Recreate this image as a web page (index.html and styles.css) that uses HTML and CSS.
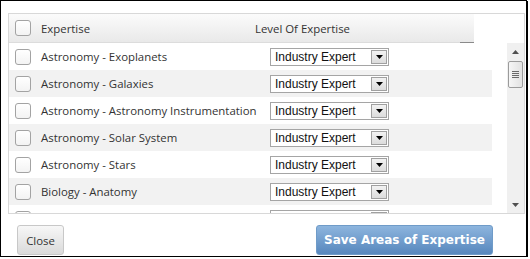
FILE: index.html
```html
<!DOCTYPE html>
<html>
<head>
<meta charset="utf-8">
<link rel="stylesheet" href="styles.css">
</head>
<body>
<div class="dialog">
  <div class="grid">
    <div class="grid-head">
      <div class="head-main">
        <span class="cb"></span>
        <span class="head-exp">Expertise</span>
        <span class="head-level">Level Of Expertise</span>
      </div>
      <div class="head-rest"></div>
    </div>
    <div class="grid-body">
      <div class="rows">
        <div class="row"><span class="cb"></span><span class="name">Astronomy - Exoplanets</span><div class="select"><span class="val">Industry Expert</span><span class="drop"><svg width="7" height="4" viewBox="0 0 7 4"><path d="M0 0H7L3.5 4Z" fill="#000"/></svg></span></div></div>
        <div class="row alt"><span class="cb"></span><span class="name">Astronomy - Galaxies</span><div class="select"><span class="val">Industry Expert</span><span class="drop"><svg width="7" height="4" viewBox="0 0 7 4"><path d="M0 0H7L3.5 4Z" fill="#000"/></svg></span></div></div>
        <div class="row"><span class="cb"></span><span class="name">Astronomy - Astronomy Instrumentation</span><div class="select"><span class="val">Industry Expert</span><span class="drop"><svg width="7" height="4" viewBox="0 0 7 4"><path d="M0 0H7L3.5 4Z" fill="#000"/></svg></span></div></div>
        <div class="row alt"><span class="cb"></span><span class="name">Astronomy - Solar System</span><div class="select"><span class="val">Industry Expert</span><span class="drop"><svg width="7" height="4" viewBox="0 0 7 4"><path d="M0 0H7L3.5 4Z" fill="#000"/></svg></span></div></div>
        <div class="row"><span class="cb"></span><span class="name">Astronomy - Stars</span><div class="select"><span class="val">Industry Expert</span><span class="drop"><svg width="7" height="4" viewBox="0 0 7 4"><path d="M0 0H7L3.5 4Z" fill="#000"/></svg></span></div></div>
        <div class="row alt"><span class="cb"></span><span class="name">Biology - Anatomy</span><div class="select"><span class="val">Industry Expert</span><span class="drop"><svg width="7" height="4" viewBox="0 0 7 4"><path d="M0 0H7L3.5 4Z" fill="#000"/></svg></span></div></div>
        <div class="row"><span class="cb"></span><span class="name">Biology - Biochemistry</span><div class="select"><span class="val">Industry Expert</span><span class="drop"><svg width="7" height="4" viewBox="0 0 7 4"><path d="M0 0H7L3.5 4Z" fill="#000"/></svg></span></div></div>
      </div>
      <div class="gap"></div>
      <div class="scrollbar">
        <div class="arrow"><svg width="7" height="4" viewBox="0 0 7 4"><path d="M3.5 0L7 4H0Z" fill="#505050"/></svg></div>
        <div class="thumb"><span class="grip"></span></div>
        <div class="track"></div>
        <div class="arrow"><svg width="7" height="4" viewBox="0 0 7 4"><path d="M0 0H7L3.5 4Z" fill="#505050"/></svg></div>
      </div>
    </div>
  </div>
  <div class="actions">
    <button class="btn-close">Close</button>
    <button class="btn-save">Save Areas of Expertise</button>
  </div>
</div>
</body>
</html>
```

FILE: styles.css
```css
* { box-sizing: border-box; }
html, body { margin: 0; padding: 0; background: #fff; }
body {
  font-family: "Open Sans", "Noto Sans", sans-serif;
  font-size: 11.4px;
  color: #333;
}
.dialog {
  width: 527px;
  height: 257px;
  border: 1px solid #000;
  box-shadow: 1px 1px 0 #000;
  padding: 12px 0 0 7px;
  display: flex;
  flex-direction: column;
}
.grid {
  width: 517px;
  height: 201px;
  border: 1px solid #d8d8d8;
  display: flex;
  flex-direction: column;
}
.grid-head {
  display: flex;
  height: 29px;
  flex: none;
}
.head-main {
  position: relative;
  width: 465px;
  height: 29px;
  display: flex;
  align-items: center;
  background: linear-gradient(#fbfbfb, #e9e9e9);
  border-bottom: 1px solid #dcdcdc;
}
.head-main::after {
  content: "";
  position: absolute;
  right: 0;
  bottom: -1px;
  width: 14px;
  height: 1px;
  background: #8a8a8a;
}
.head-rest { flex: 1; }
.cb {
  flex: none;
  width: 16px;
  height: 16px;
  margin-left: 6px;
  border: 1px solid #a3a3a3;
  border-radius: 3px;
  background: linear-gradient(#ffffff, #f3f3f3);
}
.head-exp {
  margin-left: 10px;
  width: 214px;
}
.grid-body {
  display: flex;
  height: 170px;
  overflow: hidden;
}
.rows {
  width: 483px;
  flex: none;
  overflow: hidden;
}
.row {
  height: 27px;
  display: flex;
  align-items: center;
}
.row.alt { background: #f2f2f2; }
.name {
  margin-left: 10px;
  width: 229px;
  white-space: nowrap;
}
.select {
  width: 119px;
  height: 18px;
  border: 1px solid #a5a5a5;
  background: #fff;
  display: flex;
  align-items: center;
  padding-left: 4px;
  font-family: "Liberation Sans", Arial, sans-serif;
  font-size: 12px;
  color: #111;
}
.drop {
  margin-left: auto;
  margin-right: 1px;
  width: 16px;
  height: 14px;
  border: 1px solid #a0a0a0;
  background: linear-gradient(#f2f2f2, #dcdcdc);
  display: flex;
  align-items: center;
  justify-content: center;
}
.gap { width: 15px; flex: none; }
.scrollbar {
  width: 17px;
  flex: none;
  background: #f0f0f0;
  display: flex;
  flex-direction: column;
}
.arrow {
  height: 17px;
  flex: none;
  display: flex;
  align-items: center;
  justify-content: center;
}
.thumb {
  height: 27px;
  flex: none;
  margin: 1px 1px 0 1px;
  border: 1px solid #9b9b9b;
  border-radius: 2px;
  background: linear-gradient(90deg, #f6f6f6, #e2e2e2);
  display: flex;
  align-items: center;
  justify-content: center;
}
.grip {
  width: 7px;
  height: 7px;
  background: repeating-linear-gradient(#6a6a6a 0 1px, transparent 1px 2px);
}
.track { flex: 1; }
.actions {
  width: 517px;
  margin-top: 11px;
  display: flex;
  justify-content: space-between;
  padding: 0 32px 0 9px;
}
.btn-close {
  width: 47px;
  height: 30px;
  border: 1px solid #c8c8c8;
  border-radius: 3px;
  background: linear-gradient(#f7f7f7, #dadada);
  font-family: "Open Sans", "Noto Sans", sans-serif;
  font-size: 11.4px;
  color: #333;
  padding: 0;
}
.btn-save {
  width: 177px;
  height: 30px;
  border: 1px solid #6f9bc8;
  border-radius: 3px;
  background: linear-gradient(#8db5de, #5787bd);
  font-family: "DejaVu Sans", Verdana, sans-serif;
  font-weight: bold;
  font-size: 12px;
  color: #fff;
  padding: 0;
}
```
